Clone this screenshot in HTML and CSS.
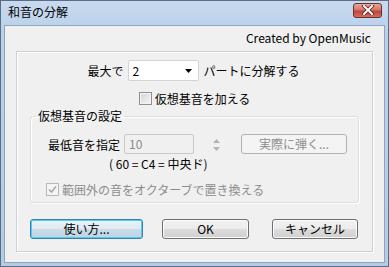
FILE: index.html
```html
<!DOCTYPE html>
<html>
<head>
  <meta charset="UTF-8">
  <title>和音の分解</title>
  <link rel="stylesheet" href="styles.css">
</head>
<body>
  <div class="window">
    <div class="titlebar">
      <span class="title">和音の分解</span>
      <div class="close">
        <svg width="14" height="10" viewBox="0 0 14 10">
          <path d="M3 1 L11 9 M11 1 L3 9" stroke="#5a2020" stroke-width="3.6" stroke-linecap="square"/>
          <path d="M3 1 L11 9 M11 1 L3 9" stroke="#ffffff" stroke-width="2" stroke-linecap="square"/>
        </svg>
      </div>
    </div>
    <div class="client">
      <div class="credit">Created by OpenMusic</div>
      <div class="panel">
        <div class="partsRow">
          <span>最大で</span>
          <div class="combo">
            <span>2</span>
            <svg width="7" height="4" viewBox="0 0 7 4"><path d="M0 0 H7 L3.5 4 Z" fill="#000"/></svg>
          </div>
          <span>パートに分解する</span>
        </div>
        <div class="checkRow">
          <span class="checkbox"></span>
          <span>仮想基音を加える</span>
        </div>
        <fieldset class="group">
          <legend>仮想基音の設定</legend>
          <div class="lowRow">
            <span>最低音を指定</span>
            <div class="field">10</div>
            <div class="spin">
              <svg width="7" height="4" viewBox="0 0 7 4"><path d="M0 4 H7 L3.5 0 Z" fill="#b4b4b4"/></svg>
              <svg width="7" height="4" viewBox="0 0 7 4"><path d="M0 0 H7 L3.5 4 Z" fill="#b4b4b4"/></svg>
            </div>
            <div class="btn disabled play">実際に弾く...</div>
          </div>
          <div class="note">( 60 = C4 = 中央ド)</div>
          <div class="checkRow octave">
            <span class="checkbox checked">
              <svg width="9" height="9" viewBox="0 0 9 9"><path d="M1 4.5 L3.5 7 L8 1.5" stroke="#a8a8a8" stroke-width="1.6" fill="none"/></svg>
            </span>
            <span>範囲外の音をオクターブで置き換える</span>
          </div>
        </fieldset>
        <div class="buttons">
          <div class="btn default help">使い方...</div>
          <div class="btn ok">OK</div>
          <div class="btn cancel">キャンセル</div>
        </div>
      </div>
    </div>
  </div>
</body>
</html>
```

FILE: styles.css
```css
* {
  box-sizing: border-box;
}
body {
  margin: 0;
  width: 389px;
  height: 267px;
  font-family: "Noto Sans CJK JP", "Liberation Sans", sans-serif;
  font-size: 12px;
  color: #000;
}
.window {
  width: 389px;
  height: 267px;
  border: 1px solid #5b6d84;
  background: linear-gradient(to bottom, #c9daee, #b9d1ea 30px, #b4cce6);
  display: flex;
  flex-direction: column;
}
.titlebar {
  height: 24px;
  display: flex;
  align-items: center;
  justify-content: space-between;
  padding: 0 6px 0 7px;
}
.title {
  line-height: 14px;
  margin-top: -2px;
}
.close {
  width: 29px;
  height: 15px;
  margin-top: -6px;
  border: 1px solid #6e2f2f;
  border-radius: 3px;
  background: linear-gradient(to bottom, #e8a797, #d0766a 45%, #c04538 55%, #d06e5f);
  display: flex;
  align-items: center;
  justify-content: center;
}
.client {
  flex: 1;
  margin: 0 3px 3px 3px;
  background: #f0f0f0;
  border: 1px solid #8ea3bd;
  padding-top: 5px;
}
.credit {
  text-align: right;
  line-height: 14px;
  padding-right: 13px;
}
.panel {
  margin: 6px 11px 0 11px;
  height: 201px;
  border: 1px solid #d0d0d0;
  box-shadow: inset 1px 1px 0 #fff, 1px 1px 0 #fff;
  padding-top: 8px;
}
.partsRow {
  display: flex;
  justify-content: center;
  align-items: center;
  height: 21px;
  padding-right: 2px;
}
.combo {
  width: 71px;
  height: 21px;
  margin: 0 5px 0 4px;
  background: #fff;
  border: 1px solid #d4d4d4;
  border-radius: 2px;
  display: flex;
  align-items: center;
  justify-content: space-between;
  padding: 0 6px 0 4px;
}
.checkRow {
  display: flex;
  justify-content: center;
  align-items: center;
  height: 16px;
  margin-top: 9px;
  gap: 3px;
}
.checkbox {
  width: 13px;
  height: 13px;
  border: 1px solid #8e8f8f;
  background: linear-gradient(135deg, #d2d4d6, #f6f6f6);
  box-shadow: inset 0 0 0 1px #f4f4f4;
  display: flex;
  align-items: center;
  justify-content: center;
}
.checkbox.checked {
  border-color: #b8b8b8;
  background: #f4f4f4;
  box-shadow: none;
}
.group {
  margin: 3px 13px 0 13px;
  padding: 11px 0 5px 0;
  border: 1px solid #d5dfe5;
  border-radius: 3px;
  box-shadow: inset 1px 1px 0 #fff, 1px 1px 0 #fff;
  min-inline-size: 0;
}
.group legend {
  margin-left: 5px;
  padding: 0 2px;
  line-height: 14px;
}
.lowRow {
  display: flex;
  align-items: center;
  padding-left: 17px;
  height: 20px;
}
.field {
  width: 70px;
  height: 20px;
  margin-left: 4px;
  border: 1px solid #c8c8c8;
  border-radius: 2px;
  color: #8a8a8a;
  padding: 2px 0 0 4px;
  line-height: 14px;
}
.spin {
  width: 16px;
  height: 20px;
  margin-left: 14px;
  display: flex;
  flex-direction: column;
  align-items: center;
  justify-content: space-between;
  padding: 5px 0 3px 0;
}
.btn {
  height: 20px;
  border: 1px solid #707070;
  border-radius: 3px;
  background: linear-gradient(to bottom, #f2f2f2, #ebebeb 50%, #dddddd 50%, #cfcfcf);
  box-shadow: inset 0 0 0 1px #fbfbfb;
  display: flex;
  align-items: center;
  justify-content: center;
  line-height: 14px;
}
.btn.disabled {
  border-color: #adb2b5;
  background: #f4f4f4;
  box-shadow: none;
  color: #8d8d8d;
}
.btn.default {
  border-color: #3c7fb1;
  background: linear-gradient(to bottom, #eaf3f9, #dfe9f1 50%, #ccdce8 50%, #c1d3e1);
  box-shadow: inset 0 0 0 1px #48d1f6;
}
.play {
  width: 106px;
  margin-left: 17px;
}
.note {
  margin: 3px 0 0 78px;
  line-height: 14px;
}
.checkRow.octave {
  justify-content: flex-start;
  padding-left: 15px;
  margin-top: 10px;
  color: #8d8d8d;
}
.buttons {
  display: flex;
  margin: 16px 0 0 13px;
}
.help {
  width: 113px;
}
.ok {
  width: 87px;
  margin-left: 19px;
}
.cancel {
  width: 86px;
  margin-left: 23px;
}
```
